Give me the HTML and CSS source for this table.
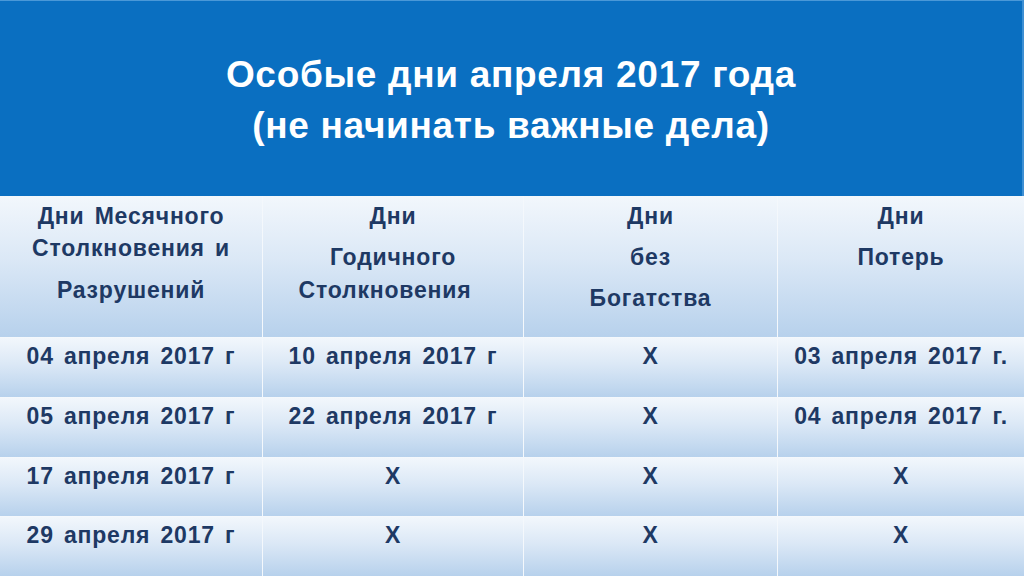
FILE: index.html
```html
<!DOCTYPE html>
<html lang="ru">
<head>
<meta charset="utf-8">
<title>Особые дни апреля 2017 года</title>
<link rel="stylesheet" href="styles.css">
</head>
<body>
<div class="slide">
  <header class="title">
    <div class="title-line">Особые дни апреля 2017 года</div>
    <div class="title-line">(не начинать важные дела)</div>
  </header>
  <div class="table">
    <div class="cell head">
      <div class="ln">Дни Месячного</div>
      <div class="ln">Столкновения и</div>
      <div class="ln g42">Разрушений</div>
    </div>
    <div class="cell head">
      <div class="ln">Дни</div>
      <div class="ln g41">Годичного</div>
      <div class="ln g33 shift">Столкновения</div>
    </div>
    <div class="cell head">
      <div class="ln">Дни</div>
      <div class="ln g41">без</div>
      <div class="ln g41">Богатства</div>
    </div>
    <div class="cell head">
      <div class="ln">Дни</div>
      <div class="ln g41">Потерь</div>
    </div>

    <div class="cell">04 апреля 2017 г</div>
    <div class="cell">10 апреля 2017 г</div>
    <div class="cell">Х</div>
    <div class="cell">03 апреля 2017 г.</div>

    <div class="cell">05 апреля 2017 г</div>
    <div class="cell">22 апреля 2017 г</div>
    <div class="cell">Х</div>
    <div class="cell">04 апреля 2017 г.</div>

    <div class="cell">17 апреля 2017 г</div>
    <div class="cell">Х</div>
    <div class="cell">Х</div>
    <div class="cell">Х</div>

    <div class="cell">29 апреля 2017 г</div>
    <div class="cell">Х</div>
    <div class="cell">Х</div>
    <div class="cell">Х</div>
  </div>
</div>
</body>
</html>
```
FILE: styles.css
```css
* { box-sizing: border-box; }
html, body { margin: 0; padding: 0; }
body {
  width: 1024px;
  height: 576px;
  overflow: hidden;
  background: #ffffff;
  font-family: "Liberation Sans", Arial, sans-serif;
}
.slide {
  width: 1024px;
  height: 576px;
  display: flex;
  flex-direction: column;
}
.title {
  height: 196px;
  background: #0a6fc1;
  border-top: 1px solid #4a98d8;
  border-right: 2px solid #3d8fd3;
  color: #ffffff;
  font-weight: bold;
  font-size: 37px;
  letter-spacing: 0.7px;
  text-align: center;
  padding-top: 48px;
}
.title-line {
  line-height: 51px;
  white-space: nowrap;
}
.table {
  flex: 1;
  display: grid;
  grid-template-columns: 262px 260px 253px 1fr;
  grid-template-rows: 141px 59px 59px 58px 59px;
  gap: 1px;
  background: #f4f8fc;
}
.cell {
  background: linear-gradient(to bottom, #f2f7fc 0%, #dbe8f6 45%, #b7d1ec 100%);
  color: #1e3964;
  font-weight: bold;
  font-size: 23px;
  letter-spacing: 0.8px;
  word-spacing: 3px;
  text-align: center;
  line-height: 32px;
  padding-top: 2px;
  white-space: nowrap;
}
.cell.head {
  padding-top: 4px;
}
.ln { line-height: 32px; }
.g41 { margin-top: 9px; }
.g42 { margin-top: 10px; }
.g33 { margin-top: 1px; }
.shift { padding-right: 16px; }
```
